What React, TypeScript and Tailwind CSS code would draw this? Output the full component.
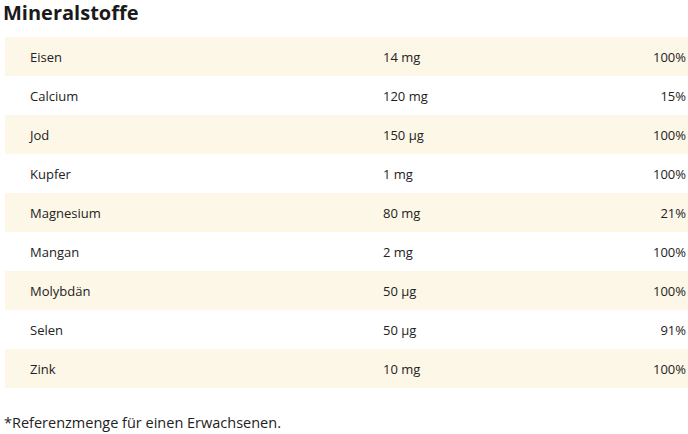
const rows = [
  ['Eisen', '14 mg', '100%'],
  ['Calcium', '120 mg', '15%'],
  ['Jod', '150 µg', '100%'],
  ['Kupfer', '1 mg', '100%'],
  ['Magnesium', '80 mg', '21%'],
  ['Mangan', '2 mg', '100%'],
  ['Molybdän', '50 µg', '100%'],
  ['Selen', '50 µg', '91%'],
  ['Zink', '10 mg', '100%'],
]

export default function App() {
  return (
    <div className="h-[434px] w-[688px] overflow-hidden bg-white pl-[5px] font-['Open_Sans',sans-serif] text-[#222]">
      <h2 className="-ml-[2px] h-[37px] pt-[1px] text-[20px] font-bold leading-[24px] text-[#1a1a1a]">
        Mineralstoffe
      </h2>
      <div className="flex flex-col">
        {rows.map(([name, amount, pct], i) => (
          <div
            key={name}
            className={
              'grid h-[39px] grid-cols-[378px_1fr_auto] items-center pt-[2px] text-[13px] ' +
              (i % 2 === 0 ? 'bg-[#fdf7e8]' : 'bg-white')
            }
          >
            <span className="pl-[25px]">{name}</span>
            <span>{amount}</span>
            <span className="pr-[2px] text-right">{pct}</span>
          </div>
        ))}
      </div>
      <p className="mt-[25px] -ml-[1px] text-[14.5px] leading-[20px]">
        *Referenzmenge für einen Erwachsenen.
      </p>
    </div>
  )
}
